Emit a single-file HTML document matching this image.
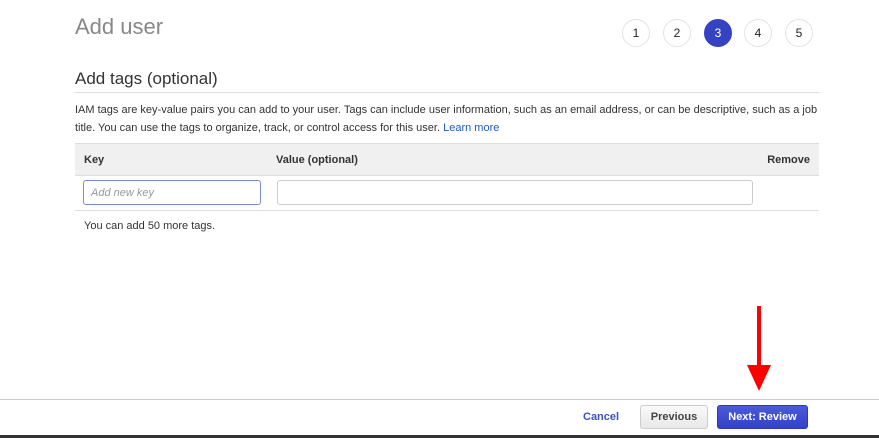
<!DOCTYPE html><html><head><style>
body{margin:0;width:879px;height:438px;position:relative;background:#fff;font-family:"Liberation Sans",Arial,sans-serif;overflow:hidden}
.a{position:absolute}
.c{position:absolute;top:19px;width:26px;height:26px;border:1px solid #e3e3e3;border-radius:50%;text-align:center;line-height:26px;font-size:12px;color:#222;box-sizing:content-box}
</style></head><body>
<div class="a" style="left:75px;top:14px;font-size:22px;color:#888">Add user</div>
<div class="c" style="left:622px">1</div>
<div class="c" style="left:663px">2</div>
<div class="c" style="left:704px;background:#3542c2;border-color:#3542c2;color:#fff">3</div>
<div class="c" style="left:744px">4</div>
<div class="c" style="left:785px">5</div>
<div class="a" style="left:75px;top:69px;font-size:17px;color:#333">Add tags (optional)</div>
<div class="a" style="left:75px;top:92px;width:744px;height:1px;background:#ddd"></div>
<div class="a" style="left:75px;top:101px;width:750px;font-size:11px;line-height:18px;color:#333">IAM tags are key-value pairs you can add to your user. Tags can include user information, such as an email address, or can be descriptive, such as a job title. You can use the tags to organize, track, or control access for this user. <span style="color:#1f5cb8">Learn more</span></div>
<div class="a" style="left:75px;top:143px;width:744px;height:33px;background:#f0f0f0;border-top:1px solid #ddd;border-bottom:1px solid #ddd;box-sizing:border-box;font-size:11px;font-weight:bold;color:#333">
<span class="a" style="left:9px;top:10px">Key</span><span class="a" style="left:201px;top:10px">Value (optional)</span><span class="a" style="right:9px;top:10px">Remove</span></div>
<div class="a" style="left:83px;top:180px;width:178px;height:25px;border:1px solid #7b8be0;border-radius:3px;box-sizing:border-box;font-size:11px;font-style:italic;color:#999;padding:6px 7px">Add new key</div>
<div class="a" style="left:277px;top:180px;width:476px;height:25px;border:1px solid #ccc;border-radius:3px;box-sizing:border-box"></div>
<div class="a" style="left:75px;top:210px;width:744px;height:1px;background:#ddd"></div>
<div class="a" style="left:84px;top:220px;font-size:11px;color:#333">You can add 50 more tags.</div>
<div class="a" style="left:757px;top:306px;width:4px;height:60px;background:#f00"></div>
<svg class="a" style="left:747px;top:365px" width="24" height="26"><polygon points="0,0 24,0 12,26" fill="#f00"/></svg>
<div class="a" style="left:0;top:399px;width:879px;height:1px;background:#ccc"></div>
<div class="a" style="left:583px;top:411px;font-size:11px;font-weight:bold;color:#3d50c4">Cancel</div>
<div class="a" style="left:640px;top:405px;width:68px;height:24px;border:1px solid #ccc;border-radius:3px;background:linear-gradient(#fafafa,#e8e8e8);box-sizing:border-box;text-align:center;line-height:22px;font-size:11px;font-weight:bold;color:#444">Previous</div>
<div class="a" style="left:717px;top:405px;width:91px;height:24px;border:1px solid #2d3ab0;border-radius:3px;background:linear-gradient(#4a5ad8,#3342c6);box-sizing:border-box;text-align:center;line-height:22px;font-size:11px;font-weight:bold;color:#fff">Next: Review</div>
<div class="a" style="left:0;top:435px;width:879px;height:3px;background:#333"></div>
</body></html>
